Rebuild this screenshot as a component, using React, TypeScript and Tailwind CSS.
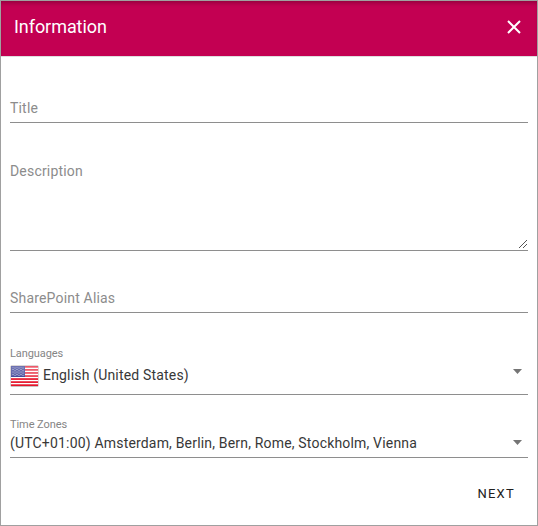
import type { ReactNode } from 'react';

function Caret({ className = '' }: { className?: string }) {
  return (
    <svg className={`mr-1.5 shrink-0 ${className}`} width="9" height="5" viewBox="0 0 9 5" aria-hidden="true">
      <path d="M0 0h9L4.5 5z" fill="#757575" />
    </svg>
  );
}

function Flag() {
  return (
    <svg className="mt-0.5 mr-1 shrink-0" width="29" height="22" viewBox="0 0 29 22" aria-hidden="true">
      <defs>
        <linearGradient id="shine" x1="0" y1="0" x2="0" y2="1">
          <stop offset="0" stopColor="#fff" stopOpacity=".3" />
          <stop offset="1" stopColor="#fff" stopOpacity=".22" />
        </linearGradient>
        <pattern id="stars" width="4" height="2.5" patternUnits="userSpaceOnUse">
          <circle cx="1" cy=".7" r=".5" fill="#fff" />
          <circle cx="3" cy="1.9" r=".5" fill="#fff" />
        </pattern>
      </defs>
      <rect x=".5" y=".5" width="28" height="21.3" rx="1" fill="#b9b0b0" />
      <rect x="1" y="1" width="27" height="20" fill="#fff" />
      {[0, 1, 2, 3, 4, 5, 6].map((i) => (
        <rect key={i} x="1" y={1 + i * 3.05} width="27" height="1.7" fill="#e5142b" />
      ))}
      <rect x="1" y="1" width="14" height="11" fill="#2f3690" />
      <rect x="2" y="2" width="12" height="9" fill="url(#stars)" />
      <rect x="1" y="1" width="27" height="10.5" fill="url(#shine)" />
    </svg>
  );
}

function Field({ className, children }: { className: string; children: ReactNode }) {
  return <div className={`flex shrink-0 border-b border-[#8e8e8e] ${className}`}>{children}</div>;
}

export default function App() {
  return (
    <div className="flex h-[526px] w-[538px] flex-col border border-[#a0a0a0] bg-white font-[Roboto,sans-serif] text-[14px] leading-5 text-[#383838]">
      <header className="flex h-14 shrink-0 items-center justify-between border-b border-[#dedede] bg-[#c30052] pr-4 pl-[13px] text-white shadow-[inset_0_4px_4px_-2px_rgba(0,0,0,0.25)]">
        <h1 className="pb-1 text-[18px] leading-6 tracking-[-0.06px]">Information</h1>
        <button aria-label="Close" className="pb-[3px]">
          <svg width="14" height="14" viewBox="0 0 14 14" fill="none" stroke="#fff" strokeWidth="2">
            <path d="M1 1l12 12M13 1L1 13" />
          </svg>
        </button>
      </header>
      <main className="flex flex-col px-[9px] tracking-[0.18px]">
        <Field className="mt-9 h-[30px] items-start pt-[5px] text-[#8c8c8c]">Title</Field>
        <Field className="mt-9 h-[92px] justify-between pt-[2px] text-[#8c8c8c]">
          <span>Description</span>
          <svg className="self-end" width="10" height="12" viewBox="0 0 10 12" fill="none" stroke="#555" aria-hidden="true">
            <path d="M1 10l8-8M5 10l4-4" />
          </svg>
        </Field>
        <Field className="mt-8 h-[30px] items-start pt-[5px] text-[#8c8c8c]">SharePoint Alias</Field>
        <Field className="mt-[33px] h-[49px] flex-col">
          <span className="text-[11px] leading-4 tracking-[-0.08px] text-[#858585]">Languages</span>
          <div className="flex h-[26px] items-center">
            <Flag />
            <span className="grow">English (United States)</span>
            <Caret className="mb-[7px]" />
          </div>
        </Field>
        <Field className="mt-[22px] h-[41px] flex-col">
          <span className="text-[11px] leading-4 tracking-[-0.08px] text-[#858585]">Time Zones</span>
          <div className="flex h-5 items-center">
            <span className="grow">(UTC+01:00) Amsterdam, Berlin, Bern, Rome, Stockholm, Vienna</span>
            <Caret className="mb-0.5" />
          </div>
        </Field>
      </main>
      <footer className="mt-[26px] flex justify-end pr-[22px]">
        <button className="text-[13px] tracking-[1.25px] text-[#202020]">NEXT</button>
      </footer>
    </div>
  );
}
